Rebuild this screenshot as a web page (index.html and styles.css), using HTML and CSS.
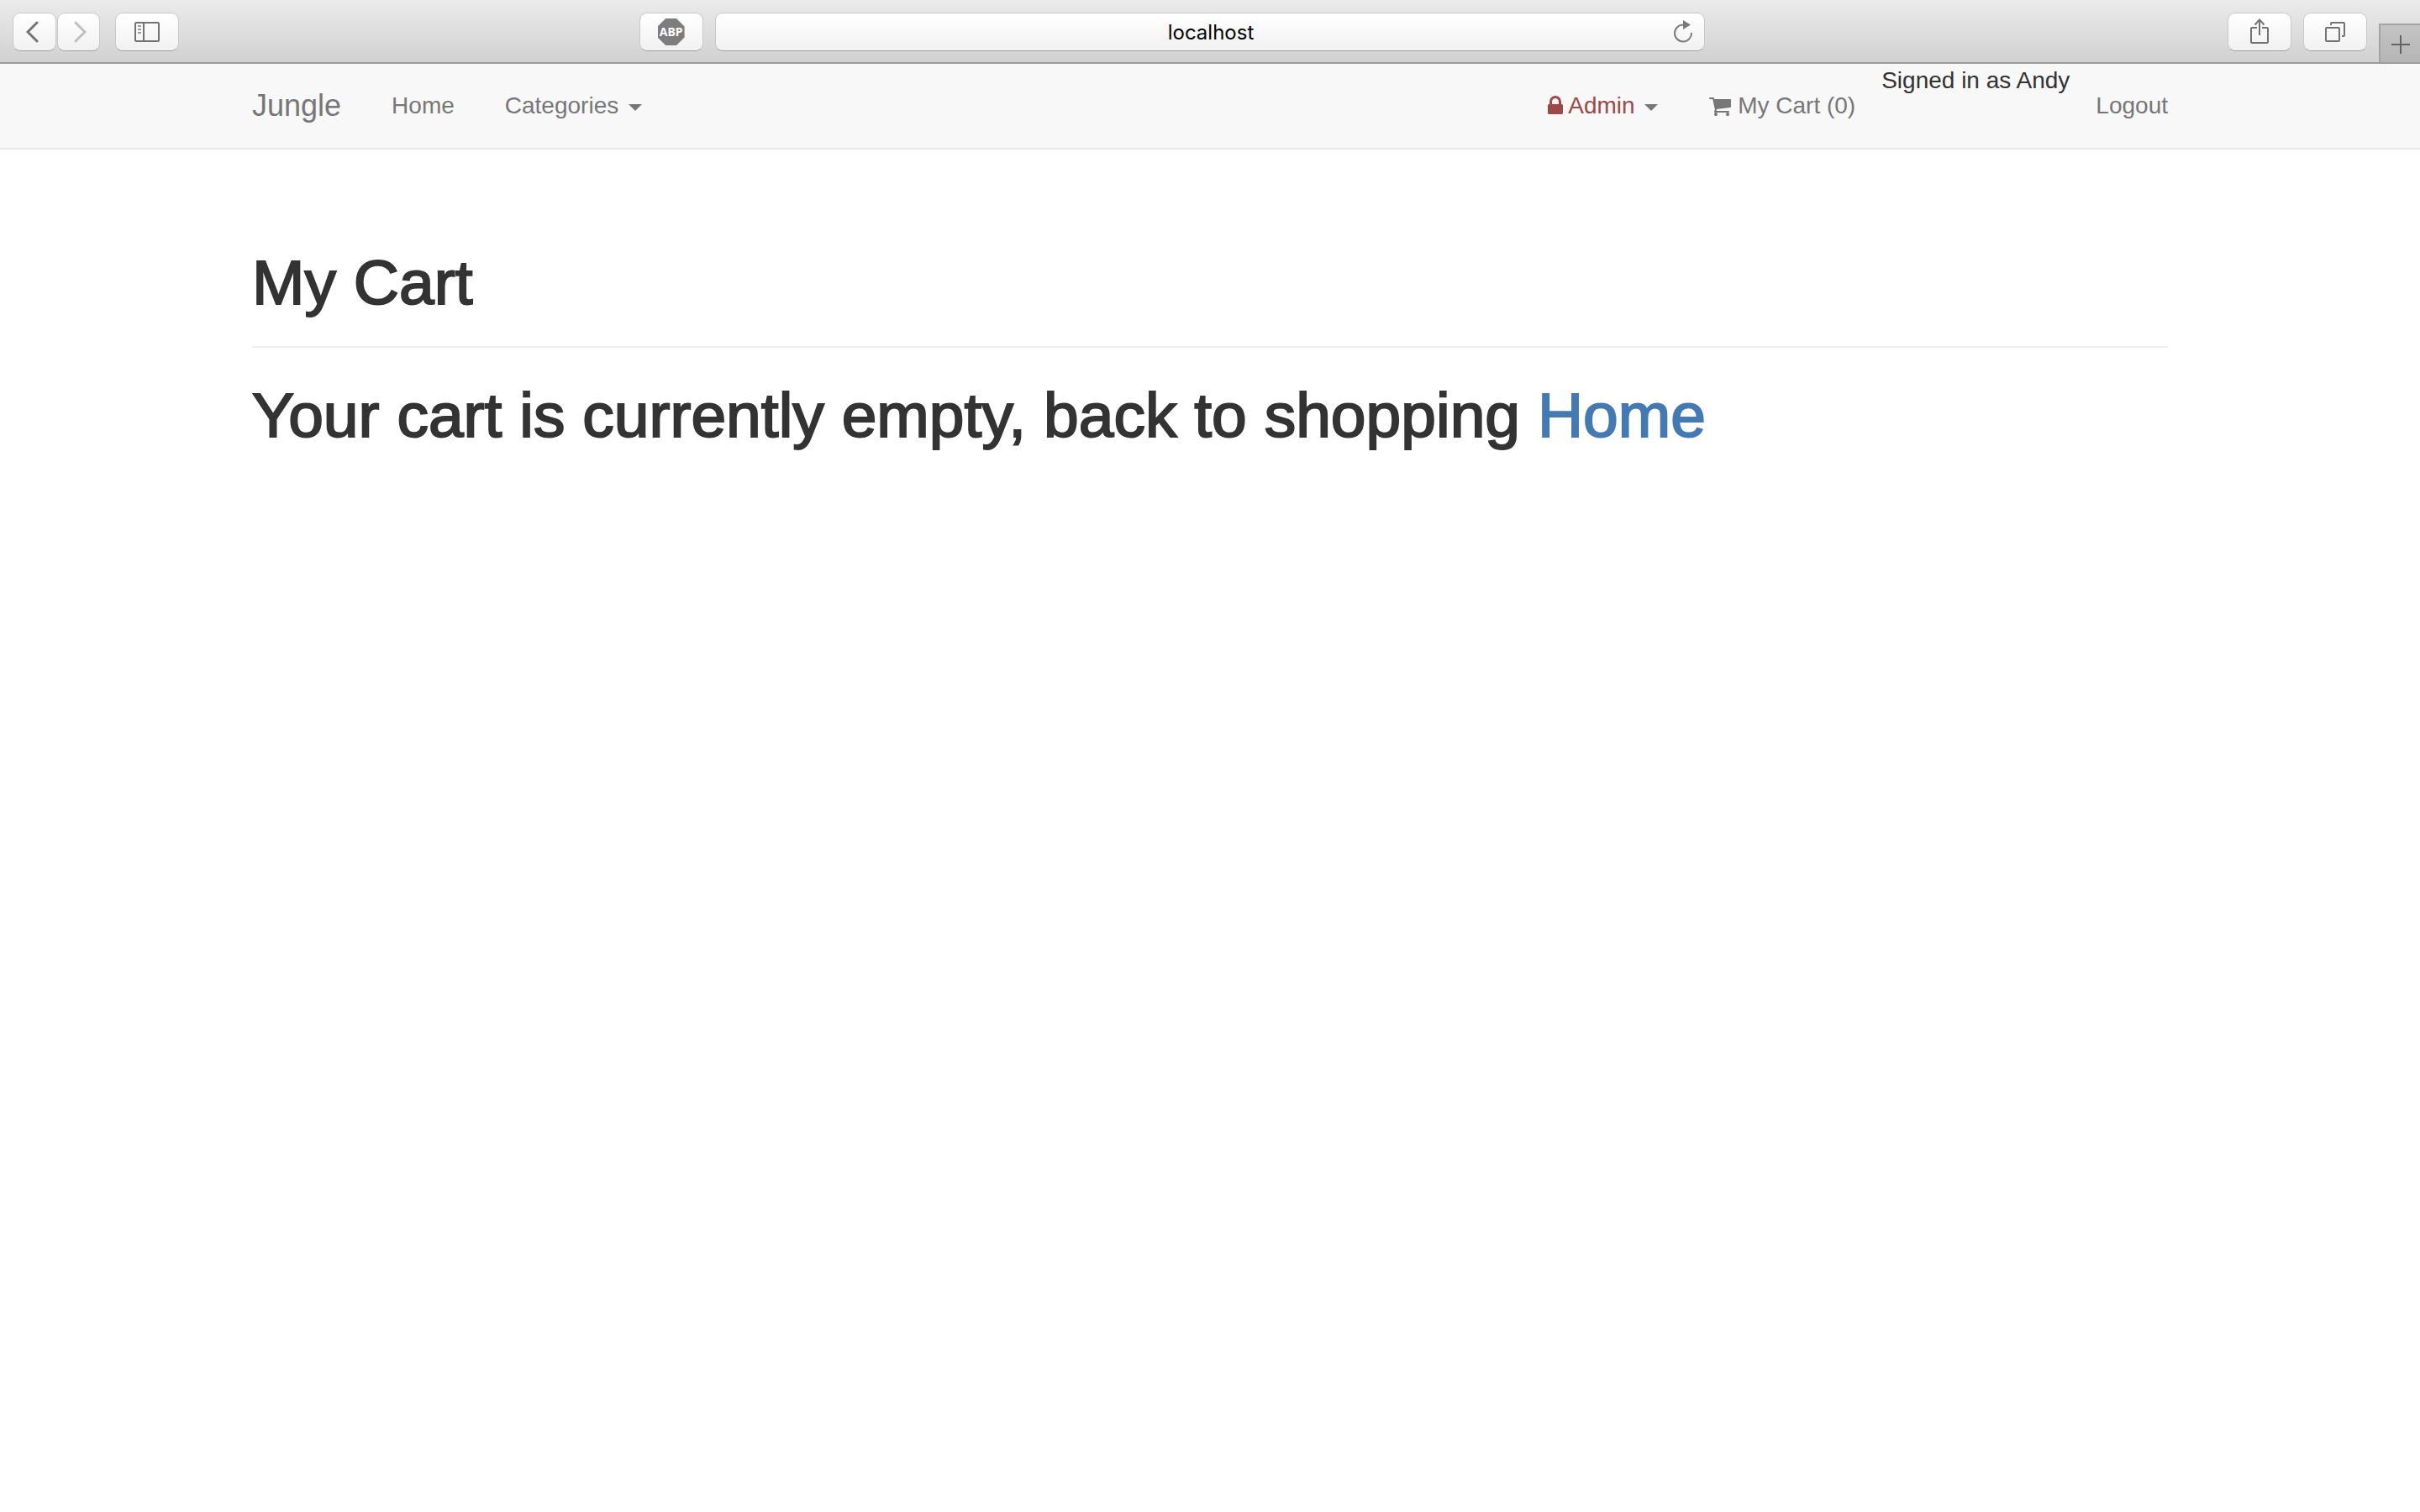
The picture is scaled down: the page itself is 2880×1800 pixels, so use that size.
FILE: index.html
```html
<!DOCTYPE html>
<html lang="en">
<head>
<meta charset="utf-8">
<title>Jungle - My Cart</title>
<link rel="stylesheet" href="styles.css">
</head>
<body>
<div class="toolbar">
  <div class="toolbar-left">
    <div class="history">
      <button class="tool tool-back" type="button" aria-label="Back">
        <svg width="16" height="26" viewBox="0 0 16 26"><path d="M13 2 2 13l11 11" fill="none" stroke="#737373" stroke-width="3" stroke-linecap="round"/></svg>
      </button>
      <button class="tool tool-forward" type="button" aria-label="Forward">
        <svg width="16" height="26" viewBox="0 0 16 26"><path d="M3 2l11 11L3 24" fill="none" stroke="#bfbfbf" stroke-width="3" stroke-linecap="round"/></svg>
      </button>
    </div>
    <button class="tool" type="button" aria-label="Show sidebar">
      <svg width="30" height="24" viewBox="0 0 30 24"><rect x="1" y="1" width="28" height="22" rx="1" fill="none" stroke="#737373" stroke-width="2"/><path d="M11 1v22" stroke="#737373" stroke-width="2"/><path d="M4 5h4M4 9h4M4 13h4" stroke="#9a9a9a" stroke-width="2"/></svg>
    </button>
    <button class="tool tool-abp" type="button"><span class="abp">ABP</span></button>
  </div>
  <div class="address">
    <input class="address-input" type="text" value="localhost" aria-label="Address">
    <button class="reload" type="button" aria-label="Reload">
      <svg width="24" height="28" viewBox="0 0 24 28"><path d="M21 15a10 10 0 1 1-9.500-9.500" fill="none" stroke="#7a7a7a" stroke-width="2"/><path d="M11 0l9 5.500-9 5.500z" fill="#7a7a7a"/></svg>
    </button>
  </div>
  <div class="toolbar-right">
    <button class="tool tool-share" type="button" aria-label="Share">
      <svg width="24" height="30" viewBox="0 0 24 30"><path d="M9 11H3a1 1 0 0 0-1 1v16a1 1 0 0 0 1 1h18a1 1 0 0 0 1-1V12a1 1 0 0 0-1-1h-6M12 20V2M6.500 7.500 12 1.500l5.500 6" fill="none" stroke="#737373" stroke-width="2"/></svg>
    </button>
    <button class="tool" type="button" aria-label="Show all tabs">
      <svg width="24" height="24" viewBox="0 0 24 24"><rect x="1" y="7" width="16" height="16" rx="1" fill="none" stroke="#737373" stroke-width="2"/><path d="M7 4V2a1 1 0 0 1 1-1h14a1 1 0 0 1 1 1v14a1 1 0 0 1-1 1h-2" fill="none" stroke="#737373" stroke-width="2"/></svg>
    </button>
    <button class="new-tab" type="button" aria-label="New tab">
      <svg width="22" height="22" viewBox="0 0 22 22"><path d="M11 0v22M0 11h22" stroke="#636363" stroke-width="2"/></svg>
    </button>
  </div>
</div>

<nav class="navbar">
  <div class="container navbar-inner">
    <a class="brand" href="#">Jungle</a>
    <ul class="nav">
      <li><a class="nav-link" href="#">Home</a></li>
      <li><a class="nav-link" href="#">Categories <span class="caret"></span></a></li>
    </ul>
    <ul class="nav nav-right">
      <li><a class="nav-link" href="#"><span class="admin"><svg class="icon" width="18" height="28" viewBox="320 0 1152 1792"><path fill="currentColor" d="M640 768h512v-192q0-106-75-181t-181-75-181 75-75 181v192zm832 96v576q0 40-28 68t-68 28h-960q-40 0-68-28t-28-68v-576q0-40 28-68t68-28h32v-192q0-184 132-316t316-132 316 132 132 316v192h32q40 0 68 28t28 68z"/></svg> Admin</span> <span class="caret"></span></a></li>
      <li><a class="nav-link" href="#"><svg class="icon" width="26" height="28" viewBox="64 0 1664 1792"><path fill="currentColor" d="M704 1536q0 52-38 90t-90 38-90-38-38-90 38-90 90-38 90 38 38 90zm896 0q0 52-38 90t-90 38-90-38-38-90 38-90 90-38 90 38 38 90zm128-1088v512q0 24-16.500 42.500t-40.500 21.500l-1044 122q13 60 13 70 0 16-24 64h920q26 0 45 19t19 45-19 45-45 19h-1024q-26 0-45-19t-19-45q0-11 8-31.500t16-36 21.500-40 15.500-29.500l-177-823h-204q-26 0-45-19t-19-45 19-45 45-19h256q16 0 28.500 6.500t19.500 15.500 13 24.500 8 26 5.500 29.500 4.500 26h1201q26 0 45 19t19 45z"/></svg> My Cart (0)</a></li>
      <li>Signed in as Andy</li>
      <li><a class="nav-link" href="#">Logout</a></li>
    </ul>
  </div>
</nav>

<main class="container content">
  <header class="page-header"><h1 class="title">My Cart</h1></header>
  <h1 class="title">Your cart is currently empty, back to shopping <a class="home-link" href="#">Home</a></h1>
</main>
</body>
</html>
```
FILE: styles.css
```css
* { box-sizing: border-box; }

body {
  margin: 0;
  background: #fff;
  color: #333;
  font-family: "Liberation Sans", Arial, sans-serif;
  font-size: 28px;
  line-height: 40px;
}

a { text-decoration: none; }
button { font: inherit; }
svg { display: block; }

/* Browser toolbar */
.toolbar {
  display: grid;
  grid-template-columns: 1fr calc(41% - 2px) 1fr;
  height: 76px;
  padding-top: 15px;
  border-bottom: 2px solid #9c9c9c;
  background: linear-gradient(#ebebeb, #d1d1d1);
}

.toolbar-left,
.toolbar-right { display: flex; align-items: flex-start; }
.toolbar-left { gap: 18px; padding: 0 14px 0 15px; }
.toolbar-right { gap: 14px; justify-content: flex-end; }
.history { display: flex; gap: 1px; }

.tool,
.address {
  height: 46px;
  border: 1px solid #c9c9c9;
  border-bottom-color: #a0a0a0;
  border-radius: 9px;
  background: linear-gradient(#fff, #f1f1f1);
}

.tool {
  display: flex;
  align-items: center;
  justify-content: center;
  width: 76px;
  padding: 0;
}

.tool-back { width: 52px; padding-right: 4px; }
.tool-forward { width: 51px; padding-left: 2px; }
.tool-abp { margin-left: auto; }
.tool-share { padding-bottom: 2px; }

.abp {
  width: 32px;
  height: 32px;
  background: #7d7d7d;
  clip-path: polygon(30% 0, 70% 0, 100% 30%, 100% 70%, 70% 100%, 30% 100%, 0 70%, 0 30%);
  color: #fff;
  font: bold 14px/32px "Noto Sans", sans-serif;
  text-align: center;
}

.address { display: flex; align-items: center; padding-left: 38px; }

.address-input {
  flex: 1;
  min-width: 0;
  padding: 2px 0 0;
  border: 0;
  background: none;
  color: #000;
  font: 24px/32px Inter, sans-serif;
  text-align: center;
}

.reload { padding: 0 12px 0 0; border: 0; background: none; }

.new-tab {
  display: flex;
  align-items: center;
  justify-content: center;
  width: 49px;
  height: 46px;
  margin-top: 13px;
  padding: 2px 0 0;
  border: solid #a3a3a3;
  border-width: 2px 0 0 2px;
  background: linear-gradient(#c4c4c4, #b5b5b5);
}

/* Site navigation */
.container {
  width: 100%;
  max-width: 2340px;
  margin: 0 auto;
  padding: 0 30px;
}

.navbar { border-bottom: 2px solid #e7e7e7; background: #f8f8f8; }
.navbar-inner { display: flex; align-items: flex-start; }

.brand { padding: 30px 30px 30px 0; color: #777; font-size: 36px; }

.nav { display: flex; margin: 0; padding: 0; list-style: none; }
.nav-right { gap: 1px; margin: 0 -30px 0 auto; }
.nav-link { display: block; padding: 30px; color: #777; }
.admin { color: #9d4945; }

.icon { display: inline-block; vertical-align: -5px; }

.caret {
  display: inline-block;
  margin-left: 4px;
  border: 8px solid transparent;
  border-top-color: #777;
  border-bottom-width: 0;
  vertical-align: middle;
}

/* Cart */
.content { padding-top: 114px; padding-bottom: 40px; }
.page-header { margin-bottom: 36px; padding-bottom: 32px; border-bottom: 2px solid #eee; }

.title {
  margin: 0;
  font-size: 75px;
  font-weight: 400;
  line-height: 88px;
  -webkit-text-stroke: 2px currentColor;
}

.home-link { color: #447ab4; }
```
